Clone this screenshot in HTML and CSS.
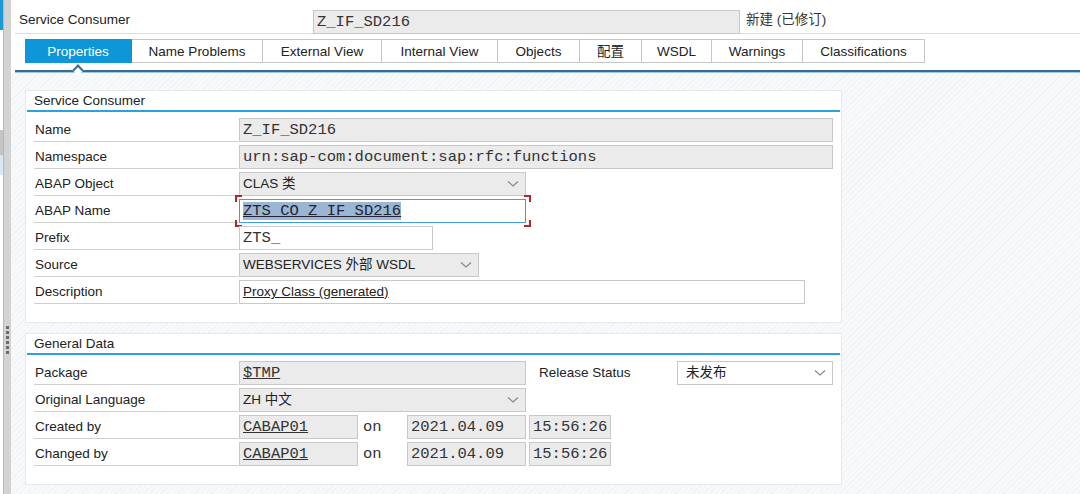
FILE: index.html
```html
<!DOCTYPE html>
<html lang="zh">
<head>
	<meta charset="UTF-8">
	<title>Service Consumer</title>
	<link rel="stylesheet" href="styles.css">
</head>
<body>
	<div class="side">
		<div class="side-top"></div>
		<div class="side-mark"></div>
		<div class="side-sel"></div>
	</div>
	<div class="splitter">
		<div class="grip"><i></i><i></i><i></i><i></i><i></i><i></i></div>
	</div>
	<div class="main">
		<div class="head">
			<div class="head-row">
				<span class="head-label">Service Consumer</span>
				<span class="field ro mono head-field">Z_IF_SD216</span>
				<span class="head-status">新建 (已修订)</span>
			</div>
			<ul class="tabs">
				<li class="on w-prop">Properties</li>
				<li class="w-np">Name Problems</li>
				<li class="w-ev">External View</li>
				<li class="w-iv">Internal View</li>
				<li class="w-obj">Objects</li>
				<li class="w-cfg">配置</li>
				<li class="w-wsdl">WSDL</li>
				<li class="w-warn">Warnings</li>
				<li class="w-cls">Classifications</li>
			</ul>
			<div class="tabline"><span class="notch"></span></div>
		</div>

		<div class="content">
			<div class="panel p1">
				<div class="panel-title">Service Consumer</div>
				<div class="row">
					<div class="lbl">Name</div>
					<div class="field ro mono w-full">Z_IF_SD216</div>
				</div>
				<div class="row">
					<div class="lbl">Namespace</div>
					<div class="field ro mono w-full">urn:sap-com:document:sap:rfc:functions</div>
				</div>
				<div class="row">
					<div class="lbl">ABAP Object</div>
					<div class="field ro sel w-286">CLAS 类<svg class="chev" width="12" height="8" viewBox="0 0 12 8"><polyline points="1,1.5 6,6 11,1.5" fill="none" stroke="#888" stroke-width="1.2"/></svg></div>
				</div>
				<div class="row">
					<div class="lbl">ABAP Name</div>
					<div class="field mono focus w-286"><span class="hl">ZTS_CO_Z_IF_SD216</span>
						<span class="br tl"></span><span class="br tr"></span><span class="br bl"></span><span class="br bbr"></span>
					</div>
				</div>
				<div class="row">
					<div class="lbl">Prefix</div>
					<div class="field mono w-194">ZTS_</div>
				</div>
				<div class="row">
					<div class="lbl">Source</div>
					<div class="field ro sel w-240">WEBSERVICES 外部 WSDL<svg class="chev" width="12" height="8" viewBox="0 0 12 8"><polyline points="1,1.5 6,6 11,1.5" fill="none" stroke="#888" stroke-width="1.2"/></svg></div>
				</div>
				<div class="row">
					<div class="lbl">Description</div>
					<div class="field sans w-566"><u>Proxy Class (generated)</u></div>
				</div>
			</div>

			<div class="panel p2">
				<div class="panel-title">General Data</div>
				<div class="row">
					<div class="lbl">Package</div>
					<div class="field ro mono w-286"><u>$TMP</u></div>
					<div class="lbl2">Release Status</div>
					<div class="field sel w-156 pad-l">未发布<svg class="chev" width="12" height="8" viewBox="0 0 12 8"><polyline points="1,1.5 6,6 11,1.5" fill="none" stroke="#888" stroke-width="1.2"/></svg></div>
				</div>
				<div class="row">
					<div class="lbl">Original Language</div>
					<div class="field ro sel w-286">ZH 中文<svg class="chev" width="12" height="8" viewBox="0 0 12 8"><polyline points="1,1.5 6,6 11,1.5" fill="none" stroke="#888" stroke-width="1.2"/></svg></div>
				</div>
				<div class="row">
					<div class="lbl">Created by</div>
					<div class="field ro mono w-118"><u>CABAP01</u></div>
					<div class="on-txt mono">on</div>
					<div class="field ro mono w-119">2021.04.09</div>
					<div class="field ro mono w-82">15:56:26</div>
				</div>
				<div class="row">
					<div class="lbl">Changed by</div>
					<div class="field ro mono w-118"><u>CABAP01</u></div>
					<div class="on-txt mono">on</div>
					<div class="field ro mono w-119">2021.04.09</div>
					<div class="field ro mono w-82">15:56:26</div>
				</div>
			</div>
		</div>
	</div>
</body>
</html>
```
FILE: styles.css
```css
*{
	margin: 0;
	padding: 0;
	box-sizing: border-box;
}
ul,li{
	list-style: none;
}
body{
	width: 1080px;
	height: 494px;
	overflow: hidden;
	display: flex;
	background: #fff;
	font-family: "Liberation Sans", "Noto Sans CJK SC", sans-serif;
	font-size: 13.5px;
	color: #222;
}
.mono{
	font-family: "Liberation Mono", "Noto Sans CJK SC", monospace;
	font-size: 15.5px;
	color: #333;
}
.sans{
	font-family: "Liberation Sans", "Noto Sans CJK SC", sans-serif;
	font-size: 13.5px;
}

/* left strip */
.side{
	width: 3px;
	background: #fff;
	display: flex;
	flex-direction: column;
}
.side-top{
	height: 30px;
	background: #1c9ad8;
}
.side-mark{
	height: 25px;
	margin-top: 100px;
	background: #c4c4c4;
}
.side-sel{
	height: 20px;
	background: #d6e8f5;
}
.splitter{
	width: 8px;
	background: #d3d3d3;
	border-left: 1px solid #b8b8b8;
	display: flex;
	flex-direction: column;
	align-items: center;
	padding-top: 326px;
}
.grip{
	display: flex;
	flex-direction: column;
	gap: 2px;
}
.grip i{
	width: 3px;
	height: 3px;
	background: #6d6d6d;
}

.main{
	flex: 1;
	display: flex;
	flex-direction: column;
}

/* header */
.head{
	padding-left: 4px;
	background: #fff;
}
.head-row{
	height: 34px;
	display: flex;
	align-items: flex-end;
	border-bottom: 1px solid #dcdcdc;
}
.head-label{
	width: 298px;
	padding-left: 4px;
	line-height: 26px;
}
.head-field{
	width: 427px;
	margin-bottom: -1px;
}
.head-status{
	margin-left: 6px;
	line-height: 26px;
	color: #333;
}
.tabs{
	display: flex;
	margin: 5px 0 0 10px;
	height: 24px;
}
.tabs li{
	flex-shrink: 0;
	height: 24px;
	line-height: 24px;
	text-align: center;
	border: 1px solid #c6c6c6;
	border-left: none;
	color: #222;
}
.tabs li.on{
	background: #0f96d8;
	border-color: #0f96d8;
	color: #fff;
}
.w-prop{ width: 107px; }
.w-np{ width: 131px; }
.w-ev{ width: 119px; }
.w-iv{ width: 116px; }
.w-obj{ width: 82px; }
.w-cfg{ width: 62px; }
.w-wsdl{ width: 70px; }
.w-warn{ width: 91px; }
.w-cls{ width: 122px; }
.tabline{
	margin-top: 7px;
	height: 3px;
	border-top: 2px solid #346d9c;
	border-bottom: 1px solid #a9c3d8;
	position: relative;
}
.notch{
	position: absolute;
	left: 59px;
	top: -6px;
	width: 8px;
	height: 8px;
	background: #fff;
	border-top: 2px solid #346d9c;
	border-left: 2px solid #346d9c;
	transform: rotate(45deg);
}

/* content */
.content{
	flex: 1;
	padding: 17px 0 0 14px;
	background: repeating-linear-gradient(135deg, #f7f9fb 0, #f7f9fb 3px, #eef3f7 3px, #eef3f7 4px);
	display: flex;
	flex-direction: column;
	gap: 10px;
}
.panel{
	width: 817px;
	background: #fff;
	border: 1px solid #e6e8ea;
	padding: 0 1px;
}
.p1{
	height: 233px;
}
.p2{
	height: 152px;
}
.panel-title{
	height: 21px;
	line-height: 19px;
	padding-left: 7px;
	border-bottom: 2px solid #2ba2de;
	margin-bottom: 6px;
	color: #222;
}
.row{
	height: 27px;
	display: flex;
	align-items: flex-start;
	padding-left: 7px;
}
.lbl{
	width: 204px;
	height: 24px;
	line-height: 23px;
	padding-left: 1px;
	border-bottom: 1px solid #cfcfcf;
	margin-right: 1px;
}
.field{
	height: 24px;
	line-height: 22px;
	border: 1px solid #c8c8c8;
	background: #fff;
	padding-left: 3px;
	white-space: nowrap;
	overflow: visible;
	position: relative;
	flex-shrink: 0;
}
.field.ro{
	background: #ebebeb;
}
.field.sel{
	display: flex;
	align-items: center;
	justify-content: space-between;
	padding-right: 6px;
	font-family: "Liberation Sans", "Noto Sans CJK SC", sans-serif;
	font-size: 13.5px;
	color: #222;
}
.field.pad-l{
	padding-left: 8px;
}
.w-full{ width: 594px; }
.w-286{ width: 287px; }
.w-194{ width: 194px; }
.w-240{ width: 240px; }
.w-566{ width: 566px; }
.w-156{ width: 156px; }
.w-118{ width: 119px; }
.w-119{ width: 119px; margin-right: 3px; }
.w-82{ width: 82px; }
.field.focus{
	border-color: #3f9fdd;
}
.hl{
	background: #9bb6d3;
	color: #223;
	text-decoration: underline;
}
.br{
	position: absolute;
	width: 7px;
	height: 7px;
	border: 0 solid #b3262a;
}
.tl{ left: -5px; top: -5px; border-top-width: 2px; border-left-width: 2px; }
.tr{ right: -6px; top: -5px; border-top-width: 2px; border-right-width: 2px; }
.bl{ left: -5px; bottom: -5px; border-bottom-width: 2px; border-left-width: 2px; }
.bbr{ right: -6px; bottom: -5px; border-bottom-width: 2px; border-right-width: 2px; }
.lbl2{
	width: 151px;
	line-height: 24px;
	padding-left: 13px;
	color: #222;
}
.on-txt{
	width: 49px;
	line-height: 24px;
	padding-left: 5px;
}
```
